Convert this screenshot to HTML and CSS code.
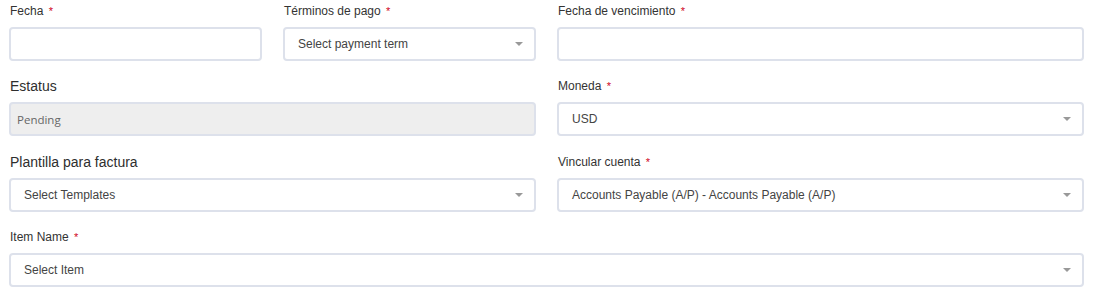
FILE: index.html
```html
<!DOCTYPE html>
<html>
<head>
<meta charset="utf-8">
<link rel="stylesheet" href="styles.css">
</head>
<body>
<form class="form">
  <div class="field">
    <label class="label">Fecha <span class="req">*</span></label>
    <div class="input"></div>
  </div>
  <div class="field">
    <label class="label">Términos de pago <span class="req">*</span></label>
    <div class="input select"><span>Select payment term</span><i class="caret"></i></div>
  </div>
  <div class="field span2">
    <label class="label">Fecha de vencimiento <span class="req">*</span></label>
    <div class="input"></div>
  </div>

  <div class="field span2">
    <label class="label big">Estatus</label>
    <div class="input disabled"><span>Pending</span></div>
  </div>
  <div class="field span2">
    <label class="label">Moneda <span class="req">*</span></label>
    <div class="input select"><span>USD</span><i class="caret"></i></div>
  </div>

  <div class="field span2">
    <label class="label big">Plantilla para factura</label>
    <div class="input select"><span>Select Templates</span><i class="caret"></i></div>
  </div>
  <div class="field span2">
    <label class="label">Vincular cuenta <span class="req">*</span></label>
    <div class="input select"><span>Accounts Payable (A/P) - Accounts Payable (A/P)</span><i class="caret"></i></div>
  </div>

  <div class="field span4">
    <label class="label">Item Name <span class="req">*</span></label>
    <div class="input select"><span>Select Item</span><i class="caret"></i></div>
  </div>
</form>
</body>
</html>
```

FILE: styles.css
```css
* { box-sizing: border-box; }
html, body { margin: 0; padding: 0; background: #fff; }
body { font-family: "Liberation Sans", Arial, sans-serif; color: #333; }

.form {
  display: grid;
  grid-template-columns: repeat(4, 1fr);
  column-gap: 21px;
  row-gap: 16.25px;
  width: 1084px;
  padding: 2px 0 0 9px;
}
.field { display: flex; flex-direction: column; }
.span2 { grid-column: span 2; }
.span4 { grid-column: span 4; }

.label {
  font-size: 12px;
  line-height: 18px;
  height: 18px;
  margin: 0 0 7px 1px;
  color: #333;
}
.label.big { font-size: 14px; color: #2e2e2e; }
.req { color: #d0021b; font-size: 11px; margin-left: 2px; }

.input {
  height: 34px;
  border: 2px solid #dde1eb;
  border-radius: 4px;
  display: flex;
  align-items: center;
  padding: 0 11px 0 13px;
  font-size: 12px;
  color: #444;
  background: #fff;
}
.input.select { justify-content: space-between; }
.input.disabled {
  background: #eeeeee;
  padding-left: 6px;
  color: #666;
  font-family: "Open Sans", "Liberation Sans", sans-serif;
  font-size: 11.5px;
}
.caret {
  width: 0;
  height: 0;
  border-left: 4px solid transparent;
  border-right: 4px solid transparent;
  border-top: 4px solid #999;
}
```
